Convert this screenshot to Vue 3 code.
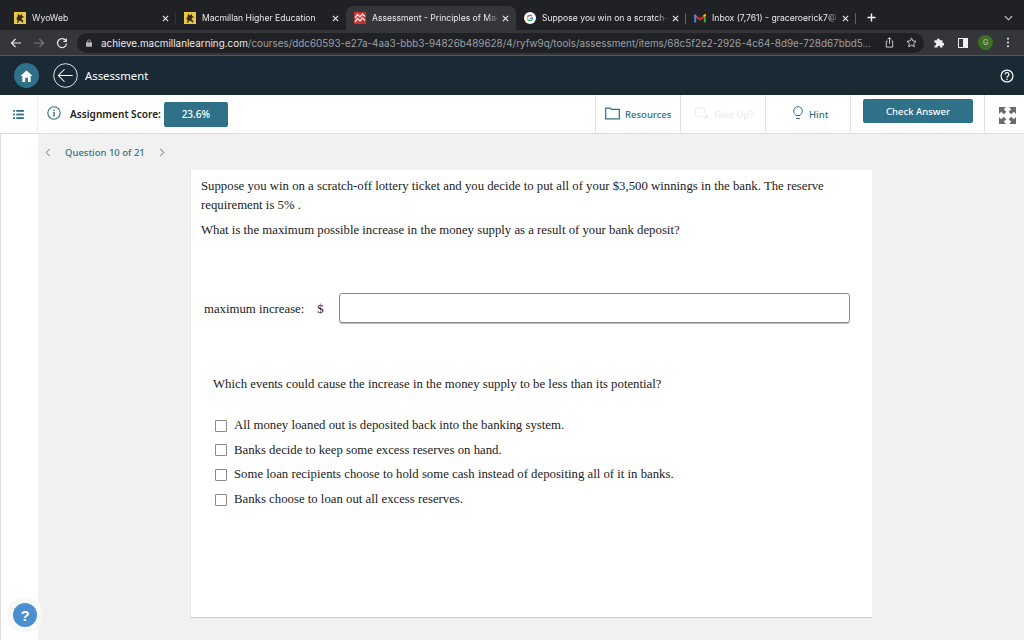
<script setup>
const tabs = [
  { id: 'wyo', title: 'WyoWeb', icon: 'wyo', sep: 'dim' },
  { id: 'mac', title: 'Macmillan Higher Education', icon: 'wyo' },
  { id: 'ass', title: 'Assessment - Principles of Mac', icon: 'mac', active: true },
  { id: 'goo', title: 'Suppose you win on a scratch-', icon: 'goo', sep: 'on' },
  { id: 'gm', title: 'Inbox (7,761) - graceroerick7@', icon: 'gm', sep: 'on' }
]
const options = [
  'All money loaned out is deposited back into the banking system.',
  'Banks decide to keep some excess reserves on hand.',
  'Some loan recipients choose to hold some cash instead of depositing all of it in banks.',
  'Banks choose to loan out all excess reserves.'
]
</script>

<template>
  <div class="page">
    <div class="tabstrip">
      <div v-for="t in tabs" :key="t.id" class="tab" :class="[{ active: t.active }, t.sep ? 'sep-' + t.sep : '']">
        <svg v-if="t.icon === 'wyo'" class="fav" viewBox="0 0 12 12">
          <rect width="12" height="12" fill="#e9c83f" />
          <path d="M4 1l1 2.200 1.700-.2L7.500 1.500 8 3.800l1.800 1-.5 1-1.300-.3-.5 1.700 1.500 1.300.3 2h-1L7 9 4.800 8.700 4.200 11H3.200l.3-3L2.200 6.500l1-1 .5-1.500z" fill="#3b2a14" />
        </svg>
        <svg v-else-if="t.icon === 'mac'" class="fav" viewBox="0 0 12 12">
          <rect width="12" height="12" fill="#c9302f" />
          <path d="M1 6l2.500-3.500L6 5l2.500-3L11 4.500M1 10l2.500-3.500L6 9l2.500-3L11 8.500" fill="none" stroke="#f6dcdc" stroke-width="1.500" />
        </svg>
        <svg v-else-if="t.icon === 'goo'" class="fav" viewBox="0 0 48 48">
          <circle cx="24" cy="24" r="24" fill="#fff" />
          <g transform="translate(9.600 9.600) scale(.6)">
            <path fill="#4285f4" d="M45 24.500c0-1.600-.1-3.100-.4-4.500H24v8.500h11.800c-.5 2.800-2 5.100-4.300 6.700l7 5.400c4.100-3.800 6.500-9.400 6.500-16.100z" />
            <path fill="#34a853" d="M24 46c5.900 0 10.900-2 14.500-5.300l-7-5.400c-2 1.300-4.500 2.100-7.500 2.100-5.700 0-10.600-3.900-12.300-9.100l-7.300 5.600C7.900 41.200 15.400 46 24 46z" />
            <path fill="#fbbc05" d="M11.700 28.300c-.9-2.700-.9-5.900 0-8.600l-7.300-5.600c-3.100 6-3.100 13.800 0 19.800z" />
            <path fill="#ea4335" d="M24 10.600c3.200 0 6.100 1.100 8.400 3.300l6.300-6.300C34.900 4.100 29.900 2 24 2 15.400 2 7.900 6.800 4.400 14.100l7.300 5.600c1.700-5.200 6.600-9.100 12.300-9.100z" />
          </g>
        </svg>
        <svg v-else class="fav" viewBox="0 0 12 12">
          <path d="M.3 3.200L6 7.400l5.700-4.200" fill="none" stroke="#d93025" stroke-width="2" />
          <path d="M1.200 10.500V2.500" stroke="#4285f4" stroke-width="2" />
          <path d="M10.800 10.500V5" stroke="#34a853" stroke-width="2" />
          <path d="M9.500 4.300L11.800 2.600" stroke="#fbbc05" stroke-width="2" />
        </svg>
        <span class="tab-title">{{ t.title }}</span>
        <svg class="tab-x" viewBox="0 0 8 8"><path d="M1 1l6 6M7 1l-6 6" stroke="#e8eaed" stroke-width="1.300" /></svg>
      </div>
      <svg class="plus" viewBox="0 0 9 9"><path d="M4.500 .5v8M.5 4.500h8" stroke="#f1f3f4" stroke-width="1.400" /></svg>
      <svg class="chev" viewBox="0 0 10 6"><path d="M1 1l4 4 4-4" fill="none" stroke="#d5d7da" stroke-width="1.200" /></svg>
    </div>

    <div class="urlbar">
      <svg class="nav" viewBox="0 0 12 12"><path d="M11 6H1.500M5.500 2l-4 4 4 4" fill="none" stroke="#e8eaed" stroke-width="1.200" /></svg>
      <svg class="nav" viewBox="0 0 12 12"><path d="M1 6h9.500M6.500 2l4 4-4 4" fill="none" stroke="#75777a" stroke-width="1.200" /></svg>
      <svg class="nav" viewBox="0 0 12 12"><path d="M10 4a4.500 4.500 0 1 0 .5 2.500M10.300 1.500V4.500H7.300" fill="none" stroke="#e8eaed" stroke-width="1.200" /></svg>
      <div class="omnibox">
        <svg class="lock" viewBox="0 0 8 10"><path d="M2 4V2.800a2 2 0 0 1 4 0V4" fill="none" stroke="#b6b8bb" /><rect y="4" width="8" height="6" rx="1" fill="#b6b8bb" /></svg>
        <span class="url"><span class="host">achieve.macmillanlearning.com</span>/courses/ddc60593-e27a-4aa3-bbb3-94826b489628/4/ryfw9q/tools/assessment/items/68c5f2e2-2926-4c64-8d9e-728d67bbd5...</span>
        <svg class="omni-ic" viewBox="0 0 12 12"><path d="M4 4.500H2.500V11h7V4.500H8M6 7.500V.8M4 2.500L6 .8l2 1.700" fill="none" stroke="#d5d7da" /></svg>
        <svg class="omni-ic" viewBox="0 0 12 12"><path d="M6 1l1.500 3.300 3.500.4-2.600 2.400.7 3.500L6 8.900l-3.100 1.700.7-3.500L1 4.700l3.500-.4z" fill="none" stroke="#d5d7da" /></svg>
      </div>
      <svg class="ext" viewBox="0 0 12 12"><path d="M.5 3.500h2.800a1.500 1.500 0 1 1 2.900 0h3v3a1.500 1.500 0 1 1 0 2.900v2.100H6.800a1.500 1.500 0 1 0-2.900 0H.5V9.300a1.500 1.500 0 1 0 0-2.900z" fill="#eceef0" /></svg>
      <svg class="panel" viewBox="0 0 11 11"><rect x=".5" y=".5" width="10" height="10" fill="none" stroke="#fff" /><rect x="5.500" y="1" width="5" height="9" fill="#f1f1f1" /></svg>
      <span class="avatar">G</span>
      <svg class="kebab" viewBox="0 0 4 12"><circle cx="2" cy="2" r="1.100" fill="#e8eaed" /><circle cx="2" cy="6" r="1.100" fill="#e8eaed" /><circle cx="2" cy="10" r="1.100" fill="#e8eaed" /></svg>
    </div>

    <header class="apphead">
      <span class="home">
        <svg viewBox="0 0 14 13"><path d="M7 .5L.5 6.500h2V13h3V8.500h3V13h3V6.500h2z" fill="#fff" /></svg>
      </span>
      <svg class="back" viewBox="0 0 26 26"><circle cx="13" cy="13" r="12.300" fill="none" stroke="#fff" stroke-width=".9" /><path d="M20.500 13H6M12 6.500L5.500 13l6.500 6.500" fill="none" stroke="#fff" stroke-width="1.100" /></svg>
      <span class="head-title">Assessment</span>
      <svg class="head-help" viewBox="0 0 16 16"><circle cx="8" cy="8" r="6.800" fill="none" stroke="#fff" stroke-width="1.400" /><path d="M5.800 6.200a2.200 2.200 0 1 1 3.400 1.900C8.400 8.600 8 9 8 10" fill="none" stroke="#fff" stroke-width="1.400" /><circle cx="8" cy="11.800" r=".9" fill="#fff" /></svg>
    </header>

    <div class="toolbar">
      <div class="menu-cell">
        <svg viewBox="0 0 12 10"><g fill="#2f7189"><rect width="2" height="2" /><rect y="4" width="2" height="2" /><rect y="8" width="2" height="2" /><rect x="3.500" width="8.500" height="2" /><rect x="3.500" y="4" width="8.500" height="2" /><rect x="3.500" y="8" width="8.500" height="2" /></g></svg>
      </div>
      <div class="score">
        <svg class="info" viewBox="0 0 14 14"><circle cx="7" cy="7" r="6.200" fill="none" stroke="#2f7189" stroke-width="1.100" /><rect x="6.300" y="6" width="1.400" height="4.500" fill="#2f7189" /><rect x="6.300" y="3.500" width="1.400" height="1.400" fill="#2f7189" /></svg>
        <span class="score-label">Assignment Score:</span>
        <span class="score-badge">23.6%</span>
      </div>
      <div class="tool tool-res">
        <svg class="ic-folder" viewBox="0 0 16 13"><path d="M.7.700h5l1.300 1.500h8.300v10H.7z" fill="none" stroke="#2f7189" stroke-width="1.300" /></svg>
        <span>Resources</span>
      </div>
      <div class="tool tool-give">
        <svg class="ic-give" viewBox="0 0 15 13"><path d="M9 9.500H.5V.5h10v6" fill="none" stroke="#ececec" /><path d="M10 8l4 4M14 8l-4 4" stroke="#e3e3e3" stroke-width="1.100" /></svg>
        <span>Give Up?</span>
      </div>
      <div class="tool tool-hint">
        <svg class="ic-hint" viewBox="0 0 10 14"><path d="M3 9.500C2 8 .7 7.200.7 5a4.300 4.300 0 0 1 8.600 0c0 2.200-1.300 3-2.300 4.500zM3 12.500h4" fill="none" stroke="#2f7189" stroke-width="1" /></svg>
        <span>Hint</span>
      </div>
      <div class="tool-check"><button class="check">Check Answer</button></div>
      <div class="tool-full">
        <svg viewBox="0 0 17 17"><g fill="#6b6b6b"><path d="M0 0h7L4.800 2.200 7.300 4.800 4.800 7.300 2.200 4.800 0 7zM17 0h-7l2.200 2.200-2.500 2.600 2.500 2.500 2.600-2.500L17 7zM0 17h7l-2.200-2.200 2.500-2.600-2.500-2.500-2.600 2.500L0 10zM17 17h-7l2.200-2.200-2.500-2.600 2.500-2.500 2.600 2.500L17 10z" /></g></svg>
      </div>
    </div>

    <div class="body">
      <aside class="side"></aside>
      <main class="main">
        <nav class="qnav">
          <svg class="caret" viewBox="0 0 6 10"><path d="M5 1L1 5l4 4" fill="none" stroke="#2f7189" /></svg>
          <span>Question 10 of 21</span>
          <svg class="caret" viewBox="0 0 6 10"><path d="M1 1l4 4-4 4" fill="none" stroke="#2f7189" /></svg>
        </nav>
        <section class="card">
          <p class="stem">Suppose you win on a scratch-off lottery ticket and you decide to put all of your $3,500 winnings in the bank. The reserve requirement is 5% .</p>
          <p class="stem second">What is the maximum possible increase in the money supply as a result of your bank deposit?</p>
          <div class="answer">
            <span class="ans-label">maximum increase:</span>
            <span class="ans-dollar">$</span>
            <div class="ans-input"></div>
          </div>
          <p class="which">Which events could cause the increase in the money supply to be less than its potential?</p>
          <ul class="opts">
            <li v-for="o in options" :key="o"><span class="box"></span>{{ o }}</li>
          </ul>
        </section>
      </main>
      <div class="help"><span>?</span></div>
    </div>
  </div>
</template>

<style>
html, body { margin: 0; background: #fff; }
</style>

<style scoped>
.page { width: 1024px; height: 640px; overflow: hidden; display: flex; flex-direction: column; font-family: "Noto Sans", sans-serif; }
.tabstrip { height: 30px; background: #202124; display: flex; align-items: flex-end; flex: none; padding-left: 6px; box-sizing: border-box; }
.tab { width: 170px; height: 24px; display: flex; align-items: center; padding: 0 7px 0 8px; box-sizing: border-box; color: #e8eaed; font: 8.600px Inter, sans-serif; position: relative; flex: none; }
.tab.active { background: #35363a; border-radius: 7px 7px 0 0; }
.sep-on::after, .sep-dim::after { content: ""; position: absolute; right: 0; top: 7px; height: 11px; width: 1px; background: #5f6368; }
.sep-dim::after { background: #333438; }
.fav { width: 12px; height: 12px; margin-right: 6px; flex: none; }
.tab-title { flex: 1; white-space: nowrap; overflow: hidden; margin-right: 5px; -webkit-mask-image: linear-gradient(90deg, #000 92%, rgba(0,0,0,.2)); mask-image: linear-gradient(90deg, #000 92%, rgba(0,0,0,.2)); }
.tab-x { width: 7px; height: 7px; flex: none; }
.plus { width: 9px; height: 9px; margin: 0 0 8px 11px; flex: none; }
.chev { width: 9px; height: 6px; margin: 0 11px 9px auto; flex: none; }
.urlbar { height: 26px; box-sizing: border-box; background: #35363a; border-bottom: 1px solid #54565a; display: flex; align-items: center; flex: none; padding-left: 10px; }
.nav { width: 12px; height: 12px; margin-right: 11px; flex: none; }
.nav:nth-of-type(3) { margin-right: 9px; }
.omnibox { width: 847px; height: 20px; border-radius: 10px; background: #202124; display: flex; align-items: center; padding: 0 7px 0 9px; box-sizing: border-box; flex: none; }
.lock { width: 6px; height: 8px; margin-right: 9px; flex: none; }
.url { font: 9.900px Inter, sans-serif; color: #9aa0a6; white-space: nowrap; flex: 1; overflow: hidden; }
.host { color: #e8eaed; }
.omni-ic { width: 11px; height: 11px; margin-left: 11px; flex: none; }
.omni-ic:first-of-type { margin-left: 9px; }
.ext { width: 11px; height: 11px; margin-left: 10px; flex: none; }
.panel { width: 10px; height: 10px; margin-left: 13px; flex: none; }
.avatar { width: 15px; height: 15px; border-radius: 50%; background: #3f6f26; color: #c8d8c0; font: 7px Inter, sans-serif; display: flex; align-items: center; justify-content: center; margin-left: 10px; flex: none; }
.kebab { width: 4px; height: 11px; margin-left: 13px; flex: none; }
.apphead { height: 39px; background: #1a2a35; display: flex; align-items: center; flex: none; padding: 0 10px 0 14px; box-sizing: border-box; }
.home { width: 25px; height: 25px; border-radius: 50%; background: #2f7189; display: flex; align-items: center; justify-content: center; }
.home svg { width: 13px; height: 12px; }
.back { width: 25px; height: 25px; margin-left: 14px; }
.head-title { color: #fff; font: 11.300px "Noto Sans", sans-serif; margin-left: 7px; }
.head-help { width: 14px; height: 14px; margin-left: auto; }
.toolbar { height: 39px; background: #fff; border-bottom: 1px solid #dcdcdc; display: flex; flex: none; box-sizing: border-box; font-family: "Noto Sans", sans-serif; }
.menu-cell { width: 38px; border-right: 1px solid #eee; box-sizing: border-box; display: flex; align-items: center; justify-content: center; flex: none; }
.menu-cell svg { width: 11px; height: 9px; margin-left: -1px; }
.score { flex: 1; min-width: 0; display: flex; align-items: center; padding-left: 9px; }
.info { width: 14px; height: 14px; margin: -3px 9px 0 0; flex: none; }
.score-label { font-size: 10.100px; font-weight: 600; color: #222; white-space: nowrap; margin-right: 3px; }
.score-badge { width: 64px; height: 25px; border-radius: 2px; background: #2f7189; color: #fff; font-size: 10px; font-weight: 500; display: flex; align-items: center; justify-content: center; }
.tool { width: 85px; border-left: 1px solid #e2e2e2; box-sizing: border-box; display: flex; align-items: center; font-size: 9.500px; font-weight: 500; color: #2f7189; white-space: nowrap; padding-top: 1px; flex: none; }
.tool-res { padding-left: 9px; }
.tool-give { color: #ececec; padding-left: 14px; }
.tool-hint { padding-left: 27px; border-right: 1px solid #e2e2e2; width: 86px; }
.ic-folder { width: 15px; height: 13px; margin: -3px 5px 0 0; flex: none; }
.ic-give { width: 14px; height: 13px; margin: -3px 5px 0 0; flex: none; }
.ic-hint { width: 10px; height: 14px; margin: -3px 6px 0 0; flex: none; }
.tool-check { width: 133px; padding: 4px 11px 0 12px; box-sizing: border-box; flex: none; }
.check { width: 110px; height: 24px; border: 0; border-radius: 2px; background: #2f7189; color: #fff; font: 500 9.500px "Noto Sans", sans-serif; padding: 0; display: block; }
.tool-full { width: 40px; flex: none; border-left: 1px solid #e2e2e2; box-sizing: border-box; display: flex; align-items: center; justify-content: center; }
.tool-full svg { width: 17px; height: 17px; margin: 3px 0 0 5px; }
.body { flex: 1; display: flex; position: relative; min-height: 0; }
.side { width: 38px; background: #fff; border-left: 1px solid #ddd; box-sizing: border-box; flex: none; }
.main { flex: 1; background: #f1f1f1; min-width: 0; }
.qnav { height: 36px; display: flex; align-items: center; color: #2f7189; font-size: 9.500px; font-weight: 500; padding-left: 7px; }
.caret { width: 6px; height: 9px; }
.qnav span { margin: 0 14px 0 14px; }
.card { width: 682px; height: 448px; margin-left: 152px; background: #fff; border-bottom: 1px solid #ccc; border-left: 1px solid #e6e6e6; box-sizing: border-box; padding: 7px 10px 0; font-family: "Liberation Serif", serif; font-size: 12.770px; color: #222; }
.stem { margin: 0; line-height: 19px; }
.second { margin-top: 6px; }
.answer { display: flex; align-items: center; margin-top: 53px; padding-left: 3px; }
.ans-label { margin: 3px 13px 0 0; }
.ans-dollar { margin: 3px 15px 0 0; }
.ans-input { width: 509px; height: 28px; border: 1px solid #8a8a8a; border-radius: 3px; box-shadow: 0 1px 0 #bbb; }
.which { margin: 51.500px 0 0 12px; line-height: 19px; }
.opts { list-style: none; margin: 20px 0 0 14px; padding: 0; }
.opts li { height: 24.600px; display: flex; align-items: center; }
.box { width: 10px; height: 10px; border: 1px solid #8a8a8a; border-radius: 1px; margin-right: 7px; flex: none; }
.help { position: absolute; left: 7px; bottom: 7px; width: 36px; height: 36px; border-radius: 50%; background: #f8f8f8; display: flex; align-items: center; justify-content: center; }
.help span { width: 24px; height: 24px; border-radius: 50%; background: #4a90d0; color: #fff; font: 700 15px "Liberation Sans", sans-serif; display: flex; align-items: center; justify-content: center; }
</style>
